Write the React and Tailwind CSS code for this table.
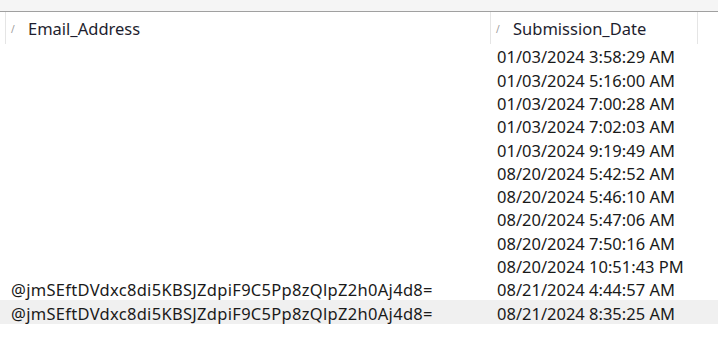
import React from 'react';

const rows = [
  { email: '', date: '01/03/2024 3:58:29 AM' },
  { email: '', date: '01/03/2024 5:16:00 AM' },
  { email: '', date: '01/03/2024 7:00:28 AM' },
  { email: '', date: '01/03/2024 7:02:03 AM' },
  { email: '', date: '01/03/2024 9:19:49 AM' },
  { email: '', date: '08/20/2024 5:42:52 AM' },
  { email: '', date: '08/20/2024 5:46:10 AM' },
  { email: '', date: '08/20/2024 5:47:06 AM' },
  { email: '', date: '08/20/2024 7:50:16 AM' },
  { email: '', date: '08/20/2024 10:51:43 PM' },
  { email: '@jmSEftDVdxc8di5KBSJZdpiF9C5Pp8zQlpZ2h0Aj4d8=', date: '08/21/2024 4:44:57 AM' },
  { email: '@jmSEftDVdxc8di5KBSJZdpiF9C5Pp8zQlpZ2h0Aj4d8=', date: '08/21/2024 8:35:25 AM', selected: true },
];

const HeaderCell = ({ label, width }) => (
  <div className={`flex items-center h-full pt-[3px] border-r border-[#e5e5e5] ${width}`}>
    <span className="w-[22px] pl-[5px] text-[10px] text-[#9a9a9a]">/</span>
    <span>{label}</span>
  </div>
);

const App = () => {
  return (
    <div
      className="w-[718px] h-[339px] bg-white overflow-hidden text-[16.5px] text-[#1a1a1a]"
      style={{ fontFamily: '"Noto Sans", "Open Sans", sans-serif' }}
    >
      {/* barra superior */}
      <div className="h-[12px] bg-[#f5f5f5] border-b border-[#a0a0a0]"></div>

      {/* cabeçalho */}
      <div className="flex h-[32px] pl-[5px] text-[#1e1e2e]">
        <div className="w-[1px] h-full bg-[#e5e5e5]"></div>
        <HeaderCell label="Email_Address" width="w-[485px]" />
        <HeaderCell label="Submission_Date" width="w-[207px]" />
      </div>

      {/* linhas */}
      <div className="flex flex-col">
        {rows.map((r, i) => (
          <div
            key={i}
            className={`flex items-center h-[23.3px] pt-[4px] leading-none ${r.selected ? 'bg-[#f0f0f0]' : ''}`}
          >
            <div className="w-[491px] pl-[11px] whitespace-nowrap tracking-[0.3px]">{r.email}</div>
            <div className="pl-[6px] whitespace-nowrap">{r.date}</div>
          </div>
        ))}
      </div>
    </div>
  );
};

export default App;
